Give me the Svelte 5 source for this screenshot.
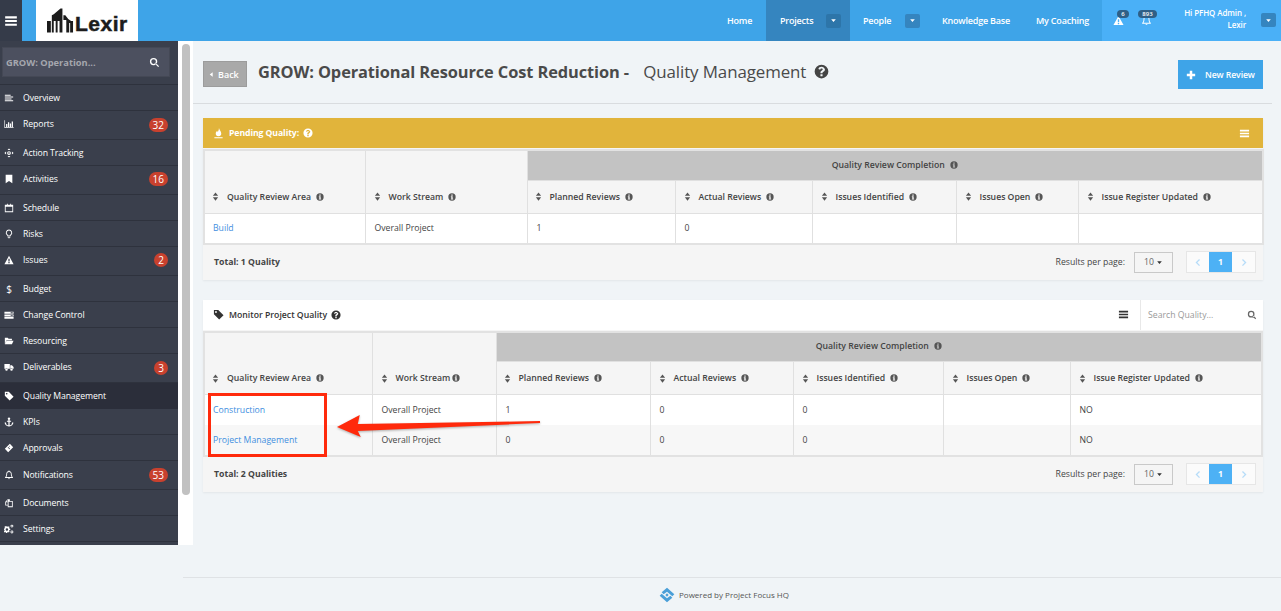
<script>
  const icons = {
    bars: 'M2 4h20v3.5H2z M2 10.2h20v3.5H2z M2 16.5h20V20H2z',
    search: 'M10 2a8 8 0 1 0 0 16a8 8 0 1 0 0-16z M10 5a5 5 0 1 1 0 10a5 5 0 1 1 0-10z M15.5 13.5L22 20L20 22L13.5 15.5z',
    overview: 'M2 4h14v2.5H2z M2 8.5h20V11H2z M2 13h16v2.5H2z M2 17.5h20V20H2z',
    reports: 'M1 3h1.5v17H23v1.5H1z M5 12h3v7H5z M9.5 8h3v11h-3z M14 11h3v8h-3z M18.5 6h3v13h-3z',
    action: 'M12 1l3.5 4h-7z M12 23l-3.5-4h7z M1 12l4-3.5v7z M23 12l-4 3.5v-7z M12 7.5a4.5 4.5 0 1 0 0 9a4.5 4.5 0 1 0 0-9z M12 10a2 2 0 1 1 0 4a2 2 0 1 1 0-4z',
    bookmark: 'M4 2h16v20l-8-5.5L4 22z',
    calendar: 'M2 4h5V2h2v2h6V2h2v2h5v18H2z M4 9v11h16V9z',
    bulb: 'M12 1a8 8 0 0 0-5 14c1 1 1.5 2 1.5 3h7c0-1 .5-2 1.5-3a8 8 0 0 0-5-14z M12 3.5a5.5 5.5 0 0 1 3.5 9.7c-1 1-1.5 1.6-1.8 2.3h-3.4c-.3-.7-.8-1.3-1.8-2.3A5.5 5.5 0 0 1 12 3.5z M9 19h6v2H9z M10.5 22h3v1h-3z',
    warning: 'M12 2L23 22H1z M10.5 9h3v6.5h-3z M10.5 17h3v3h-3z',
    server: 'M1 4h22v5H1z M1 10.5h22v5H1z M1 17h22v4H1z M16 5.5v2h5v-2z M16 12v2h5v-2z',
    folder: 'M2 4h7l2 2.5h8V10H6L2 19z M6 11.5h17L19 20H2z',
    truck: 'M1 5h13v11H1z M15 8h4l4 4v4h-8z M6 15a3 3 0 1 0 0 6a3 3 0 1 0 0-6z M18 15a3 3 0 1 0 0 6a3 3 0 1 0 0-6z',
    tag: 'M2 2h9.5L23 13.5 13.5 23 2 11.5z M6.5 4.5a2 2 0 1 0 0 4a2 2 0 1 0 0-4z',
    anchor: 'M12 1a3 3 0 0 0-1.5 5.6V9H7v2.5h3.5V20C8 19.7 5.5 18 4.5 16L6 15 2 12v5l1 .5c1.6 3 5 5.5 9 5.5s7.4-2.5 9-5.5l1-.5v-5l-4 3 1.5 1c-1 2-3.5 3.7-6 4v-8.5H17V9h-3.5V6.6A3 3 0 0 0 12 1z',
    ticket: 'M14 2l8 8-12 12-8-8z M13 6.5L11.8 7.700l1.200 1.200 1.200-1.200z M10 9.500L8.800 10.700l4.500 4.500 1.200-1.200z',
    bell: 'M12 1a1.5 1.5 0 0 0-1.500 1.700C7 3.400 5.500 6 5.500 9.500c0 4-1 6-3 8V19h19v-1.500c-2-2-3-4-3-8 0-3.500-1.500-6.100-5-6.800A1.500 1.500 0 0 0 12 1z M12 4.500c3 0 4.500 2 4.500 5 0 3.500.8 6 2 7.500h-13c1.200-1.500 2-4 2-7.500 0-3 1.500-5 4.500-5z M10 20h4a2 2 0 0 1-4 0z',
    files: 'M3 9L9 3h5v4h7v15H9v-4H3z M5 10v6h4v-6z M11 9v11h8V9z M9.500 5L6 8.500h3.500z',
    cogs: 'M8 6l2 .500 1.500-1.200 2 2-1.200 1.700.7 2 2 .3v3l-2 .3-.7 2 1.200 1.700-2 2-1.500-1.200-2 .7-.4 2h-3l-.3-2-2-.7-1.500 1.200-2-2L1.500 16 .5 14H0v-3l1.500-.3.7-2L1 7l2-2 1.700 1.200 1.800-.7z M7 10a3 3 0 1 0 0 6a3 3 0 1 0 0-6z M19 1.500a3.500 3.500 0 1 0 0 7a3.500 3.500 0 1 0 0-7z M19 3.500a1.500 1.500 0 1 1 0 3a1.500 1.500 0 1 1 0-3z M19 15.500a3.500 3.500 0 1 0 0 7a3.500 3.500 0 1 0 0-7z M19 17.500a1.500 1.500 0 1 1 0 3a1.500 1.500 0 1 1 0-3z',
    fire: 'M13 0c1 5 5 7 5 12a6 6 0 0 1-12 0c0-3 2-4 3-6 1 1 1 2 1.500 3C11.500 6.500 13 4 13 0z M3 20h18v2.500H3z',
    sort: 'M12 1l7 9H5z M12 23l-7-9h14z',
    info: 'M12 1a11 11 0 1 0 0 22a11 11 0 1 0 0-22z M10 4.500h4v3.500h-4z M8.500 10H14v7h1.500v2.500h-7V17H10v-4.500H8.500z',
    question: 'M12 1a11 11 0 1 0 0 22a11 11 0 1 0 0-22z M10.300 16.200h3.400v3.300h-3.400z M12.200 4.500c-2.800 0-4.700 1.400-5.200 3.600l2.900.9c.3-1 1-1.700 2.200-1.700 1.100 0 1.900.5 1.900 1.300 0 .8-.6 1.200-1.500 1.800-1.200.8-2.200 1.600-2.200 3.600v.7h3.300v-.3c0-1 .5-1.400 1.400-2 1.300-.9 2.500-1.800 2.500-3.800C16.600 6 14.600 4.500 12.200 4.500z',
    plus: 'M9 2h6v7h7v6h-7v7H9v-7H2V9h7z',
    caret: 'M4 8h16l-8 9z',
    left: 'M16 5L9 12l7 7-2.500 2.500L4 12l9.500-9.500z',
    right: 'M8 5l7 7-7 7 2.500 2.500L20 12 10.500 2.500z',
    back: 'M16 4v16L6 12z'
  };

  const menu = [
    { label: 'Overview', icon: 'overview' },
    { label: 'Reports', icon: 'reports', badge: 32 },
    { label: 'Action Tracking', icon: 'action' },
    { label: 'Activities', icon: 'bookmark', badge: 16 },
    { label: 'Schedule', icon: 'calendar' },
    { label: 'Risks', icon: 'bulb' },
    { label: 'Issues', icon: 'warning', badge: 2 },
    { label: 'Budget', glyph: '$' },
    { label: 'Change Control', icon: 'server' },
    { label: 'Resourcing', icon: 'folder' },
    { label: 'Deliverables', icon: 'truck', badge: 3 },
    { label: 'Quality Management', icon: 'tag', active: true },
    { label: 'KPIs', icon: 'anchor' },
    { label: 'Approvals', icon: 'ticket' },
    { label: 'Notifications', icon: 'bell', badge: 53 },
    { label: 'Documents', icon: 'files' },
    { label: 'Settings', icon: 'cogs' }
  ];

  const subCols = ['Planned Reviews', 'Actual Reviews', 'Issues Identified', 'Issues Open', 'Issue Register Updated'];

  const pending = {
    widths: [161, 162, 148, 137, 144, 122, 185],
    rows: [{ area: 'Build', cells: ['1', '0', '', '', ''] }],
    total: 'Total: 1 Quality'
  };
  const monitor = {
    widths: [168, 124, 154, 143, 150, 127, 192],
    rows: [
      { area: 'Construction', cells: ['1', '0', '0', '', 'NO'] },
      { area: 'Project Management', cells: ['0', '0', '0', '', 'NO'] }
    ],
    total: 'Total: 2 Qualities'
  };
</script>

{#snippet icon(name, cls = '')}
  <svg class="ic {cls}" viewBox="0 0 24 24" aria-hidden="true"><path d={icons[name]} fill-rule="evenodd" /></svg>
{/snippet}

{#snippet qualityTable(t, compact)}
  <table class="grid">
    <colgroup>
      {#each t.widths as w}<col style:width="{w}px" />{/each}
    </colgroup>
    <thead>
      <tr class="group-row">
        <th rowspan="2" class="low"><span class="th-in">{@render icon('sort', 'sort')}<span>Quality Review Area</span>{@render icon('info', 'inf')}</span></th>
        <th rowspan="2" class="low"><span class="th-in" class:tight={compact}>{@render icon('sort', 'sort')}<span>Work Stream</span>{@render icon('info', 'inf')}</span></th>
        <th colspan="5" class="group"><span class="th-in center"><span>Quality Review Completion</span>{@render icon('info', 'inf')}</span></th>
      </tr>
      <tr class="sub-row">
        {#each subCols as c}
          <th><span class="th-in">{@render icon('sort', 'sort')}<span>{c}</span>{@render icon('info', 'inf')}</span></th>
        {/each}
      </tr>
    </thead>
    <tbody>
      {#each t.rows as r}
        <tr>
          <td><a href="#top" class="link">{r.area}</a></td>
          <td>Overall Project</td>
          {#each r.cells as c}<td>{c}</td>{/each}
        </tr>
      {/each}
    </tbody>
  </table>
  <div class="panel-foot">
    <strong>{t.total}</strong>
    <div class="pager-wrap">
      <span>Results per page:</span>
      <span class="per">10 {@render icon('caret', 'mini')}</span>
      <div class="pager">
        <span class="pg first-pg">{@render icon('left', 'chev')}</span>
        <span class="pg on">1</span>
        <span class="pg">{@render icon('right', 'chev')}</span>
      </div>
    </div>
  </div>
{/snippet}

<div class="page">
  <header class="top">
    <button class="burger" aria-label="Menu">{@render icon('bars', 'burger-ic')}</button>
    <div class="logo">
      <svg class="bld" viewBox="0 0 28 27" aria-hidden="true">
        <path d="M0 14h4v12H0z M5 8l2-1 7-6h2v25h-3V14h-2v12H9V14H7v12H5z M17 8h2l3 4 3 2h2v12h-3V16h-1v10h-3V13h-3z" fill="#1c1c1c" />
      </svg>
      <span class="logo-txt">Lexir</span>
    </div>
    <nav class="nav">
      <span class="nav-i home">Home</span>
      <span class="nav-i projects">Projects<span class="cbtn dark">{@render icon('caret', 'mini')}</span></span>
      <span class="nav-i people">People<span class="cbtn">{@render icon('caret', 'mini')}</span></span>
      <span class="nav-i kb">Knowledge Base</span>
      <span class="nav-i coach">My Coaching</span>
    </nav>
    <div class="usr">
      <span class="alert first">{@render icon('warning', 'al')}<span class="pill">6</span></span>
      <span class="alert second">{@render icon('bell', 'al')}<span class="pill wide">893</span></span>
      <span class="hi">Hi PFHQ Admin ,<br />Lexir</span>
      <span class="cbtn">{@render icon('caret', 'mini')}</span>
    </div>
  </header>

  <div class="shell">
    <aside class="side">
      <div class="side-search">
        <span>GROW: Operation...</span>
        {@render icon('search', 'side-s')}
      </div>
      <ul class="menu">
        {#each menu as m}
          <li class:tall={m.badge} class:active={m.active}>
            <span class="m-ic">
              {#if m.glyph}{m.glyph}{:else}{@render icon(m.icon)}{/if}
            </span>
            <span class="m-l">{m.label}</span>
            {#if m.badge}<span class="badge">{m.badge}</span>{/if}
          </li>
        {/each}
      </ul>
    </aside>
    <div class="track"><div class="thumb"></div></div>

    <main class="main">
      <div class="head">
        <button class="back">{@render icon('back', 'back-ic')}Back</button>
        <h1><b>GROW: Operational Resource Cost Reduction -</b> Quality Management</h1>
        {@render icon('question', 'title-q')}
        <button class="new">{@render icon('plus', 'plus-ic')}New Review</button>
      </div>

      <section class="panel">
        <div class="panel-head gold">
          {@render icon('fire', 'ph-ic')}
          <span class="ph-t bold">Pending Quality:</span>
          {@render icon('question', 'ph-q')}
          {@render icon('bars', 'ph-bars')}
        </div>
        {@render qualityTable(pending, false)}
      </section>

      <section class="panel second-panel">
        <div class="panel-head plain">
          {@render icon('tag', 'ph-ic')}
          <span class="ph-t">Monitor Project Quality</span>
          {@render icon('question', 'ph-q')}
          {@render icon('bars', 'ph-bars')}
          <div class="q-search">
            <span>Search Quality...</span>
            {@render icon('search', 'q-s')}
          </div>
        </div>
        {@render qualityTable(monitor, true)}
      </section>

      <div class="mark box"></div>
      <svg class="mark arrow" viewBox="0 0 210 30" aria-hidden="true">
        <path d="M2 16 L25 4 L23 13 L207 10 L207 12 L23 20 L26 26 Z" fill="#ff2a0c" />
      </svg>
    </main>
  </div>

  <footer class="foot">
    <svg class="foot-logo" viewBox="0 0 24 24" aria-hidden="true">
      <path d="M12 1l11 10-3 3-8-7-5 4-3-3z M12 23L1 13l3-3 8 7 5-4 3 3z M12 9.500l2.500 2.500-2.500 2.500L9.500 12z" fill="#4a9fd8" />
    </svg>
    <span>Powered by Project Focus HQ</span>
  </footer>
</div>

<style>
  :global(body) {
    margin: 0;
    background: #f0f4f7;
  }
  .page {
    font-family: "Open Sans", "Liberation Sans", sans-serif;
    font-size: 8.700px;
    color: #444;
    width: 1281px;
    height: 611px;
    overflow: hidden;
    position: relative;
  }
  .ic {
    width: 10px;
    height: 10px;
    fill: currentColor;
    flex: none;
    display: block;
  }

  /* header */
  .top {
    height: 41px;
    background: #3ea4e8;
    display: flex;
    align-items: stretch;
    color: #fff;
  }
  .burger {
    width: 22px;
    padding: 0;
    border: 0;
    background: #353b49;
    color: #fff;
    display: flex;
    align-items: center;
    justify-content: center;
  }
  :global(.burger-ic.ic) {
    width: 14px;
    height: 14px;
  }
  .logo {
    margin-left: 14px;
    width: 102px;
    background: #fff;
    display: flex;
    align-items: center;
    padding-left: 11px;
    box-sizing: border-box;
  }
  .bld {
    width: 27px;
    height: 27px;
    flex: none;
  }
  .logo-txt {
    font-family: "Liberation Sans", sans-serif;
    font-weight: 700;
    font-size: 21px;
    color: #1c1c1c;
    margin-left: 1px;
    margin-top: 6px;
    letter-spacing: 0.5px;
    -webkit-text-stroke: 0.5px #1c1c1c;
  }
  .nav {
    margin-left: auto;
    display: flex;
    align-items: stretch;
  }
  .nav-i {
    display: flex;
    align-items: center;
    font-weight: 600;
    font-size: 9px;
    letter-spacing: -0.2px;
    white-space: nowrap;
  }
  .home { width: 39px; padding-left: 13px; }
  .projects { padding-left: 14px; background: #3585bf; justify-content: space-between; padding-right: 9px; width: 61px; }
  .people { padding-left: 13px; justify-content: space-between; padding-right: 8px; width: 57px; }
  .kb { width: 81px; padding-left: 14px; }
  .coach { width: 66px; padding-left: 13px; }
  .cbtn {
    width: 15px;
    height: 14px;
    border-radius: 2px;
    background: #3585bf;
    display: flex;
    align-items: center;
    justify-content: center;
    flex: none;
  }
  .cbtn.dark {
    background: #2d75a9;
  }
  :global(.mini.ic) {
    width: 7px;
    height: 7px;
  }
  .usr {
    width: 179px;
    background: #4ab0f7;
    display: flex;
    align-items: center;
    position: relative;
    box-sizing: border-box;
    padding-right: 5px;
    justify-content: flex-end;
  }
  .alert {
    position: absolute;
    top: 15px;
  }
  .first { left: 11px; }
  .second { left: 39px; }
  :global(.al.ic) {
    width: 11px;
    height: 11px;
  }
  .pill {
    position: absolute;
    top: -5px;
    left: 4px;
    height: 8px;
    min-width: 12px;
    border-radius: 5px;
    background: #2f5f86;
    font-size: 6px;
    line-height: 8px;
    text-align: center;
    font-weight: 600;
  }
  .pill.wide {
    left: -3px;
    min-width: 19px;
  }
  .hi {
    text-align: right;
    font-weight: 600;
    font-size: 8px;
    line-height: 11.500px;
    margin-right: 15px;
    letter-spacing: -0.1px;
    margin-top: -4px;
  }
  .usr .cbtn {
    margin-top: -1px;
  }

  /* shell */
  .shell {
    display: flex;
    align-items: flex-start;
    height: 536px;
  }
  .side {
    width: 178px;
    height: 504px;
    background: #3a3f4c;
    color: #fff;
    flex: none;
    overflow: hidden;
  }
  .side-search {
    margin: 6px 8px 7px 2px;
    height: 30px;
    background: #4c505f;
    box-sizing: border-box;
    padding: 0 9px 0 3px;
    display: flex;
    align-items: center;
    justify-content: space-between;
    color: #a5a7ae;
    font-weight: 700;
    font-size: 9.300px;
    border: 1px solid #444855;
  }
  :global(.side-s.ic) {
    color: #fff;
    width: 11px;
    height: 11px;
  }
  .menu {
    list-style: none;
    margin: 0;
    padding: 0;
    border-top: 1px solid #2e323d;
  }
  .menu li {
    height: 26.200px;
    box-sizing: border-box;
    border-bottom: 1px solid #2e323d;
    display: flex;
    align-items: center;
    position: relative;
    font-size: 8.700px;
    letter-spacing: -0.1px;
    padding-top: 1.500px;
  }
  .menu li.tall {
    height: 28.600px;
    padding-top: 0;
    padding-bottom: 1px;
  }
  .menu li.active {
    background: #2b2e3a;
    border-bottom-color: #2b2e3a;
  }
  .m-ic {
    width: 23px;
    flex: none;
    display: flex;
    justify-content: center;
    box-sizing: border-box;
    padding-right: 5px;
    font-size: 10px;
  }
  .badge {
    position: absolute;
    right: 10px;
    top: 6.500px;
    background: #c8412e;
    border-radius: 7px;
    min-width: 14px;
    padding: 0 4px;
    box-sizing: border-box;
    height: 14px;
    line-height: 14px;
    text-align: center;
    font-size: 10px;
    letter-spacing: 0;
  }
  .track {
    width: 15px;
    height: 504px;
    background: #fff;
    flex: none;
    box-sizing: border-box;
    padding: 3px 3px 0 4px;
  }
  .thumb {
    height: 451px;
    border-radius: 4px;
    background: #c1c1c1;
  }

  /* main */
  .main {
    flex: 1;
    min-width: 0;
    padding: 0 18px 0 10px;
    position: relative;
  }
  .head {
    height: 63px;
    box-sizing: border-box;
    margin: 0 -9px 0 -10px;
    padding: 0 9px 0 10px;
    border-bottom: 1px solid #d9dcdf;
    display: flex;
    align-items: center;
  }
  .back {
    width: 44px;
    height: 26px;
    box-sizing: border-box;
    margin-top: 4px;
    background: #a9a9a9;
    border: 1px solid #9c9c9c;
    color: #fff;
    font: 600 9px "Open Sans", sans-serif;
    display: flex;
    align-items: center;
    padding: 0 0 0 4px;
    gap: 3px;
  }
  :global(.back-ic.ic) {
    width: 7px;
    height: 7px;
  }
  h1 {
    margin: -2px 0 0 11px;
    font-size: 16.900px;
    font-weight: 400;
    color: #4a4a4a;
    white-space: nowrap;
    letter-spacing: -0.1px;
  }
  h1 b {
    font-weight: 700;
    font-size: 16.400px;
    margin-right: 10px;
  }
  :global(.title-q.ic) {
    width: 15px;
    height: 15px;
    margin: -2px 0 0 8px;
    color: #444;
  }
  .new {
    margin-left: auto;
    margin-right: 0;
    margin-top: 5px;
    width: 85px;
    height: 29px;
    background: #3ea4e8;
    border: 0;
    color: #fff;
    font: 600 8.700px "Open Sans", sans-serif;
    letter-spacing: -0.1px;
    display: flex;
    align-items: center;
    padding: 0 0 0 8px;
    gap: 9px;
  }
  :global(.plus-ic.ic) {
    width: 10px;
    height: 10px;
  }

  .panel {
    margin-top: 14px;
    background: #f5f5f5;
    box-shadow: 0 1px 2px rgba(0, 0, 0, 0.06);
  }
  .second-panel {
    margin-top: 20px;
  }
  .panel-head {
    height: 30px;
    display: flex;
    align-items: center;
    padding: 0 0 0 10px;
    margin-bottom: 1px;
    box-sizing: border-box;
  }
  .gold {
    background: #e1b43b;
    color: #fff;
    padding-right: 13px;
  }
  .plain {
    background: #fff;
    color: #333;
  }
  :global(.ph-ic.ic) {
    width: 11px;
    height: 11px;
  }
  .ph-t {
    margin-left: 5px;
    font-weight: 600;
    white-space: nowrap;
  }
  .ph-t.bold {
    font-weight: 700;
    letter-spacing: -0.1px;
  }
  :global(.ph-q.ic) {
    margin-left: 4px;
    width: 10px;
    height: 10px;
  }
  :global(.ph-bars.ic) {
    margin-left: auto;
    width: 11px;
    height: 11px;
  }
  .plain :global(.ph-bars.ic) {
    margin-right: 11px;
  }
  .q-search {
    width: 123px;
    height: 30px;
    border-left: 1px solid #e8e8e8;
    box-sizing: border-box;
    padding: 0 6px 0 7px;
    display: flex;
    align-items: center;
    justify-content: space-between;
    color: #999;
  }
  :global(.q-s.ic) {
    width: 10px;
    height: 10px;
    color: #666;
  }

  .grid {
    width: 1060px;
    table-layout: fixed;
    border-collapse: collapse;
    border: 2px solid #e2e2e2;
    box-sizing: border-box;
  }
  .grid th,
  .grid td {
    border: 1px solid #e0e0e0;
    padding: 0 0 0 9px;
    font-weight: 400;
    text-align: left;
    box-sizing: border-box;
    white-space: nowrap;
    overflow: hidden;
  }
  .grid tr > :first-child {
    padding-left: 8px;
  }
  .grid tbody tr + tr td {
    border-top: 0;
  }
  .grid tbody tr:has(+ tr) td {
    border-bottom: 0;
  }
  .grid th {
    background: #f5f5f5;
    color: #444;
    font-weight: 600;
  }
  .grid th.low {
    vertical-align: bottom;
    padding-bottom: 10px;
  }
  .grid th.group {
    background: #c3c3c3;
    padding: 0 0 1px;
  }
  .group-row {
    height: 30px;
  }
  .sub-row {
    height: 33px;
  }
  .grid tbody tr {
    height: 30.500px;
    background: #fff;
  }
  .grid tbody tr:nth-child(2) {
    background: #f7f7f7;
  }
  .grid td {
    color: #444;
  }
  .link {
    color: #3f8fe0;
    text-decoration: none;
  }
  .th-in {
    display: flex;
    align-items: center;
  }
  .th-in.center {
    justify-content: center;
  }
  :global(.sort.ic) {
    width: 9px;
    height: 9px;
    margin-left: -2px;
    margin-right: 7px;
    color: #555;
  }
  :global(.inf.ic) {
    width: 8px;
    height: 8px;
    margin-left: 5px;
    color: #555;
  }
  .th-in.tight :global(.inf.ic) {
    margin-left: 2px;
  }

  .panel-foot {
    height: 35px;
    display: flex;
    align-items: center;
    justify-content: space-between;
    padding: 0 7px 0 11px;
    color: #444;
  }
  .panel-foot strong {
    font-weight: 700;
  }
  .pager-wrap {
    display: flex;
    align-items: center;
  }
  .per {
    margin-left: 9px;
    width: 39px;
    height: 21px;
    box-sizing: border-box;
    border: 1px solid #c9c9c9;
    display: flex;
    align-items: center;
    justify-content: center;
    gap: 2px;
    color: #666;
  }
  .per :global(.mini.ic) {
    color: #333;
  }
  .pager {
    margin-left: 13px;
    display: flex;
    height: 22px;
    box-sizing: border-box;
    border: 1px solid #e6e6e6;
    background: #fbfbfb;
  }
  .pg {
    width: 23px;
    display: flex;
    align-items: center;
    justify-content: center;
    color: #b6dcf8;
  }
  .first-pg {
    width: 22px;
  }
  .pg.on {
    background: #4db1f5;
    color: #fff;
    font-weight: 700;
  }
  :global(.chev.ic) {
    width: 9px;
    height: 9px;
  }

  /* annotation */
  .mark {
    position: absolute;
    pointer-events: none;
  }
  .box {
    left: 15px;
    top: 352px;
    width: 119px;
    height: 64px;
    box-sizing: border-box;
    border: 3px solid #ff2a0c;
  }
  .arrow {
    left: 142px;
    top: 370px;
    width: 208px;
    height: 30px;
    filter: drop-shadow(0 1px 1px rgba(0, 0, 0, 0.3));
  }

  .foot {
    margin-left: 183px;
    height: 34px;
    border-top: 1px solid #dfe2e5;
    display: flex;
    align-items: center;
    justify-content: center;
    padding-right: 16px;
    gap: 4px;
    color: #555;
    font-size: 8px;
    box-sizing: border-box;
  }
  .foot-logo {
    width: 16px;
    height: 16px;
  }
</style>
